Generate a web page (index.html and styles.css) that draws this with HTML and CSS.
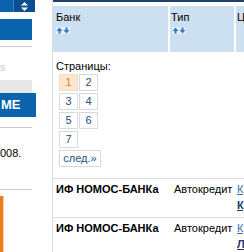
FILE: index.html
```html
<!DOCTYPE html>
<html lang="ru">
<head>
  <meta charset="UTF-8">
  <title>Кредиты</title>
  <link rel="stylesheet" href="styles.css">
</head>
<body>
<div class="page">

  <aside class="side">
    <div class="side-top">
      <span class="side-select">
        <svg width="7" height="9" viewBox="0 0 7 9"><path d="M3.5 0 L7 3.5 H0 Z M3.5 9 L0 5.5 H7 Z" fill="#fff"/></svg>
      </span>
    </div>
    <div class="side-bar"></div>
    <div class="side-line"></div>
    <p class="side-note">s</p>
    <div class="side-shade"></div>
    <div class="side-button">МЕ</div>
    <div class="side-line"></div>
    <p class="side-date">008.</p>
    <div class="side-line"></div>
    <div class="side-banner"></div>
  </aside>

  <main class="content">
    <div class="top-rule"></div>

    <div class="grid head">
      <div class="th th-bank">Банк
        <svg class="sort" width="14" height="7" viewBox="0 0 14 7">
          <rect width="7" height="7" fill="#e4eef8"/>
          <path d="M3.5 0.5 L6.5 4 H0.5 Z M2.5 4 H4.5 V6.5 H2.5 Z" fill="#2f7cc4"/>
          <rect x="7" width="7" height="7" fill="#e4eef8"/>
          <path d="M10.5 6.5 L13.5 3 H7.5 Z M9.5 0.5 H11.5 V3 H9.5 Z" fill="#2f7cc4"/>
        </svg>
      </div>
      <div class="th th-type">Тип
        <svg class="sort" width="14" height="7" viewBox="0 0 14 7">
          <rect width="7" height="7" fill="#e4eef8"/>
          <path d="M3.5 0.5 L6.5 4 H0.5 Z M2.5 4 H4.5 V6.5 H2.5 Z" fill="#2f7cc4"/>
          <rect x="7" width="7" height="7" fill="#e4eef8"/>
          <path d="M10.5 6.5 L13.5 3 H7.5 Z M9.5 0.5 H11.5 V3 H9.5 Z" fill="#2f7cc4"/>
        </svg>
      </div>
      <div class="th th-goal">Цель</div>
    </div>

    <p class="pages-title">Страницы:</p>
    <div class="pager">
      <span class="page-box active">1</span>
      <a class="page-box" href="#">2</a>
      <a class="page-box" href="#">3</a>
      <a class="page-box" href="#">4</a>
      <a class="page-box" href="#">5</a>
      <a class="page-box" href="#">6</a>
      <a class="page-box" href="#">7</a>
      <a class="page-box next" href="#">след.»</a>
    </div>

    <div class="grid row">
      <div class="td td-bank">ИФ НОМОС-БАНКа</div>
      <div class="td td-type">Автокредит</div>
      <div class="td td-goal">
        <a href="#">Кредит на новый автомобиль</a><br>
        <a class="strong" href="#">Кредитная программа</a>
      </div>
    </div>
    <div class="grid row">
      <div class="td td-bank">ИФ НОМОС-БАНКа</div>
      <div class="td td-type">Автокредит</div>
      <div class="td td-goal">
        <a href="#">Кредит на подержанный автомобиль</a><br>
        <a class="strong" href="#">Льготная программа</a>
      </div>
    </div>
  </main>

</div>
</body>
</html>
```

FILE: styles.css
```css
/* общие */
body {
  margin: 0;
  font-family: "Liberation Sans", Arial, sans-serif;
  font-size: 11px;
  color: #000;
  background: #fff;
  overflow: hidden;
}
p {
  margin: 0;
}
.page {
  display: flex;
  width: 600px;
  height: 252px;
}

/* левая колонка */
.side {
  width: 36px;
  margin-right: 16px;
  flex-shrink: 0;
}
.side-top {
  width: 35px;
  height: 12px;
  background-color: #0b63ad;
  display: flex;
  justify-content: flex-end;
}
.side-select {
  width: 22px;
  height: 12px;
  box-sizing: border-box;
  background-color: #0a4f90;
  border-left: 1px solid #3b7fbf;
  display: flex;
  align-items: center;
  justify-content: center;
}
.side-bar {
  width: 32px;
  height: 21px;
  margin-top: 7px;
  background-color: #0b63ad;
}
.side-line {
  width: 32px;
  height: 1px;
  background-color: #c9c9c9;
  margin-top: 6px;
}
.side-note {
  margin-top: 13px;
  height: 14px;
  line-height: 14px;
  color: #c8c8c8;
}
.side-shade {
  width: 32px;
  height: 13px;
  margin-top: 6px;
  background-color: #e7e7e7;
}
.side-button {
  width: 36px;
  height: 24px;
  line-height: 24px;
  background-color: #0b63ad;
  color: #fff;
  font-weight: bold;
  font-size: 13px;
  padding-left: 1px;
  box-sizing: border-box;
}
.side-button + .side-line {
  margin-top: 10px;
}
.side-date {
  margin-top: 18px;
  line-height: 14px;
}
.side-date + .side-line {
  margin-top: 29px;
}
.side-banner {
  width: 3px;
  height: 60px;
  margin-top: 6px;
  background-color: #f07a1e;
  border-right: 1px solid #fbd2a8;
}

/* правая часть */
.content {
  border-left: 1px solid #d6dee7;
  flex: 1;
}
.top-rule {
  height: 2px;
  background-color: #1f416a;
}
.grid {
  display: grid;
  grid-template-columns: 115px 64px 160px;
  column-gap: 2px;
}
.head {
  margin-top: 4px;
  height: 46px;
}
.th {
  background-color: #cde0f1;
  padding-top: 4px;
  line-height: 14px;
}
.th-bank {
  padding-left: 3px;
}
.th-type, .th-goal {
  padding-left: 1px;
}
.sort {
  display: block;
  margin-top: 3px;
}
.th-type .sort {
  margin-left: 1px;
}

/* страницы */
.pages-title {
  margin-top: 7px;
  padding-left: 3px;
  line-height: 14px;
}
.pager {
  display: grid;
  grid-template-columns: 19px 19px;
  gap: 2px 1px;
  margin: 1px 0 0 6px;
}
.page-box {
  height: 17px;
  line-height: 15px;
  box-sizing: border-box;
  border: 1px solid #d9d9d9;
  text-align: center;
  color: #24507f;
  text-decoration: none;
  background-color: #fff;
}
.page-box.active {
  background-color: #fce6cf;
  border-color: #f3dcc4;
  color: #e0822c;
}
.page-box.next {
  grid-column: 1 / -1;
  width: 42px;
}

/* строки */
.row {
  border-top: 1px solid #dcdcdc;
  padding: 2px 0 4px;
  line-height: 16px;
}
.pager + .row {
  margin-top: 11px;
}
.td-bank {
  padding-left: 3px;
  font-weight: bold;
  white-space: nowrap;
}
.td-type {
  padding-left: 4px;
}
.td-goal {
  padding-left: 1px;
  white-space: nowrap;
}
.td-goal a {
  color: #3a6db0;
}
.td-goal a.strong {
  color: #183a66;
  font-weight: bold;
}
```
